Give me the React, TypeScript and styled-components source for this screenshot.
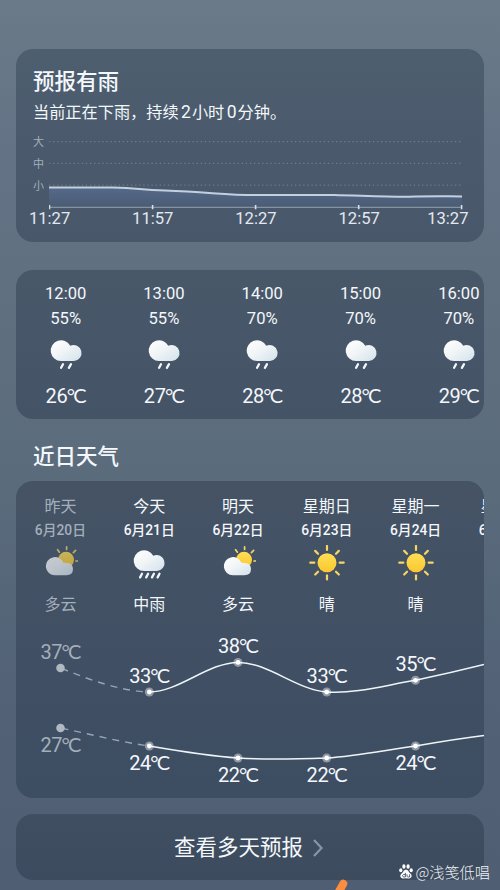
import React from "react";
import styled, { createGlobalStyle } from "styled-components";

const Global = createGlobalStyle`
  * { box-sizing: border-box; }
  body { margin: 0; }
`;

const Page = styled.main`
  position: relative;
  width: 500px;
  height: 890px;
  overflow: hidden;
  display: flex;
  flex-direction: column;
  align-items: center;
  padding-top: 49px;
  color: #f4f7fb;
  font-family: Roboto, "Noto Sans CJK SC", sans-serif;
  background: linear-gradient(180deg, #6a7a88 0%, #647486 15%, #5f6f80 35%, #5a6b7c 55%, #526176 80%, #4f5e72 100%);
`;

const Card = styled.section<{ $h: number; $from: string; $to: string; $gap?: number }>`
  flex: none;
  width: 468px;
  height: ${(p) => p.$h}px;
  margin-bottom: ${(p) => p.$gap ?? 0}px;
  border-radius: 17px;
  overflow: hidden;
  background: linear-gradient(180deg, ${(p) => p.$from}, ${(p) => p.$to});
`;

const Heading = styled.h2`
  margin: 0;
  font-size: 21.5px;
  line-height: 30px;
  font-weight: 500;
`;

const RainHeading = styled(Heading)`
  padding: 18px 17px 0;
`;

const SectionHeading = styled(Heading)`
  width: 468px;
  height: 62px;
  padding: 23px 17px 0;
`;

const RainText = styled.p`
  margin: 1px 0 0;
  padding-left: 17px;
  font-size: 16.2px;
  line-height: 29px;
  height: 28px;
`;

const Figure = styled.span`
  font-size: 17.5px;
  margin: 0 1px 0 2.4px;
`;

const RainChart = styled.div`
  display: flex;
  height: 82px;
`;

const Levels = styled.div`
  width: 33px;
  padding: 6px 0 0 17px;
  font-size: 11px;
  line-height: 22px;
  color: #a3aebb;
`;

const TimeAxis = styled.div`
  display: flex;
  width: 516px;
  margin-left: -18px;
  font-size: 16.6px;
  line-height: 22px;
  color: #e3e9f0;
`;

const Tick = styled.span<{ $last?: boolean }>`
  width: 103.2px;
  text-align: center;
  transform: ${(p) => (p.$last ? "translateX(-14.5px)" : "none")};
`;

const Row = styled.div`
  display: flex;
`;

const Hour = styled.div`
  flex: 0 0 98.3px;
  display: flex;
  flex-direction: column;
  align-items: center;
  padding: 10.5px 0 0 1px;
`;

const HourText = styled.span`
  font-size: 16.6px;
  line-height: 25px;
  height: 25px;
`;

const HourIcon = styled.div`
  margin-top: 5.5px;
  height: 36px;
`;

const HourTemp = styled.div`
  margin-top: 11px;
`;

const TempText = styled.span<{ $dim?: boolean }>`
  display: inline-flex;
  align-items: baseline;
  font-size: 20px;
  line-height: 26px;
  letter-spacing: -0.4px;
  color: ${(p) => (p.$dim ? "#a4afbc" : "#f4f7fb")};
`;

const Unit = styled.span`
  font-family: Lato, sans-serif;
  font-size: 20px;
  line-height: 20px;
  letter-spacing: -1.8px;
  margin: 0 1px 0 -0.6px;
`;

const Day = styled.div<{ $dim?: boolean }>`
  flex: 0 0 88.8px;
  height: 149px;
  display: flex;
  flex-direction: column;
  align-items: center;
  padding-top: 14px;
  color: ${(p) => (p.$dim ? "#a4afbc" : "#f4f7fb")};
  white-space: nowrap;
`;

const DayName = styled.span`
  font-size: 16px;
  line-height: 24px;
`;

const DayDate = styled.span`
  font-size: 13.8px;
  line-height: 22px;
  font-weight: 500;
`;

const DayIcon = styled.div<{ $dim?: boolean }>`
  height: 36px;
  margin: 4px 0 12px;
  opacity: ${(p) => (p.$dim ? 0.7 : 1)};
`;

const Plot = styled.div`
  position: relative;
  height: 168px;
`;

const PlotLabel = styled.div<{ $x: number; $y: number }>`
  position: absolute;
  left: ${(p) => p.$x - 40}px;
  top: ${(p) => p.$y - 13}px;
  width: 80px;
  text-align: center;
`;

const MoreButton = styled.button`
  flex: none;
  display: flex;
  align-items: center;
  justify-content: center;
  gap: 9px;
  width: 468px;
  height: 66px;
  padding: 2px 2px 0 0;
  border: 0;
  border-radius: 17px;
  color: #f4f7fb;
  font: 21.5px/30px Roboto, "Noto Sans CJK SC", sans-serif;
  background: linear-gradient(180deg, #3f4e60, #3c4b5d);
`;

const Watermark = styled.div`
  position: absolute;
  right: 10px;
  bottom: 8px;
  display: flex;
  align-items: center;
  gap: 2px;
  font: 300 15.2px/22px "Noto Sans CJK SC", sans-serif;
  color: #eef1f5;
`;

const Swoosh = styled.svg`
  position: absolute;
  left: 331px;
  bottom: 0;
`;

const svgBlock: React.CSSProperties = { display: "block" };

const Defs = () => (
  <svg width="0" height="0" style={{ position: "absolute" }}>
    <defs>
      <linearGradient id="cloud" x1="0" y1="0" x2="1" y2="1">
        <stop offset="0" stopColor="#ffffff" />
        <stop offset="0.45" stopColor="#f1f5f7" />
        <stop offset="1" stopColor="#d3e2eb" />
      </linearGradient>
      <linearGradient id="sun" x1="0" y1="0" x2="0" y2="1">
        <stop offset="0" stopColor="#ffdf55" />
        <stop offset="1" stopColor="#fcc62f" />
      </linearGradient>
      <linearGradient id="rain" x1="0" y1="0" x2="0" y2="1">
        <stop offset="0" stopColor="#5d77a4" stopOpacity="0.55" />
        <stop offset="1" stopColor="#536a92" stopOpacity="0.25" />
      </linearGradient>
    </defs>
  </svg>
);

const CLOUD = "M13 25A10.4 10.4 0 1 1 22.3 9.7A8 8 0 1 1 26 25Z";

const RainIcon = ({ heavy }: { heavy?: boolean }) => (
  <svg width="36" height="36" viewBox="0 0 36 36" style={svgBlock}>
    <path d={CLOUD} fill="url(#cloud)" transform={heavy ? "translate(0 1)" : undefined} />
    <path
      d={
        heavy
          ? "M11 28.8l-1.9 3.6M17.1 28.8l-1.9 3.6M22.9 28.8L21 32.4M28.5 28.8l-1.9 3.6"
          : "M15 28.2l-1.9 3.6M23 28.2l-2.1 3.6"
      }
      stroke="#f3f7fa"
      strokeWidth="2.3"
      strokeLinecap="round"
    />
  </svg>
);

const CloudyIcon = () => (
  <svg width="36" height="36" viewBox="0 0 36 36" style={svgBlock}>
    <circle cx="24" cy="14.8" r="8" fill="url(#sun)" />
    <path
      d="M24.6 1.8v2.7M15.6 4.7l1.8 2.5M33.6 5.4l-2.2 2.2M34 16h2.8"
      stroke="#f2d46b"
      strokeWidth="1.7"
      strokeLinecap="round"
    />
    <path
      d="M12.8 30.3A9.1 9.1 0 1 1 21.4 17.8Q31 17 31 24.1Q31 30.3 24.3 30.3Z"
      fill="url(#cloud)"
    />
  </svg>
);

const SunIcon = () => (
  <svg width="36" height="36" viewBox="0 0 36 36" style={svgBlock}>
    <circle cx="18" cy="17.7" r="9.5" fill="url(#sun)" />
    {[0, 45, 90, 135, 180, 225, 270, 315].map((a) => (
      <path
        key={a}
        d="M18 1v4"
        transform={`rotate(${a} 18 17.7)`}
        stroke="#f6d665"
        strokeWidth="2.2"
        strokeLinecap="round"
      />
    ))}
  </svg>
);

const Temp = ({ v, dim }: { v: number; dim?: boolean }) => (
  <TempText $dim={dim}>
    {v}
    <Unit>°C</Unit>
  </TempText>
);

const hours = [
  ["12:00", "55%", 26],
  ["13:00", "55%", 27],
  ["14:00", "70%", 28],
  ["15:00", "70%", 28],
  ["16:00", "70%", 29],
] as const;

const days = [
  { name: "昨天", date: "6月20日", icon: "cloudy", text: "多云", dim: true },
  { name: "今天", date: "6月21日", icon: "rain", text: "中雨" },
  { name: "明天", date: "6月22日", icon: "cloudy", text: "多云" },
  { name: "星期日", date: "6月23日", icon: "sun", text: "晴" },
  { name: "星期一", date: "6月24日", icon: "sun", text: "晴" },
  { name: "星期二", date: "6月25日", icon: "", text: "" },
];

const highs = [
  { t: 37, x: 44.5, y: 38, ly: 22 },
  { t: 33, x: 133.3, y: 62, ly: 46 },
  { t: 38, x: 222, y: 32.4, ly: 16 },
  { t: 33, x: 310.7, y: 62, ly: 46 },
  { t: 35, x: 399.5, y: 50.3, ly: 34 },
];
const lows = [
  { t: 27, x: 44.5, y: 98, ly: 115 },
  { t: 24, x: 133.3, y: 116, ly: 133 },
  { t: 22, x: 222, y: 128, ly: 145 },
  { t: 22, x: 310.7, y: 128, ly: 145 },
  { t: 24, x: 399.5, y: 116, ly: 133 },
];

const DayGlyph = ({ kind }: { kind: string }) =>
  kind === "rain" ? <RainIcon heavy /> : kind === "cloudy" ? <CloudyIcon /> : kind === "sun" ? <SunIcon /> : null;

export default function App() {
  return (
    <Page>
      <Global />
      <Defs />
      <Card $h={193} $gap={28} $from="#4d5e6f" $to="#48576a">
        <RainHeading>预报有雨</RainHeading>
        <RainText>
          当前正在下雨，持续<Figure>2</Figure>小时<Figure>0</Figure>分钟。
        </RainText>
        <RainChart>
          <Levels>
            <div>大</div>
            <div>中</div>
            <div>小</div>
          </Levels>
          <svg width="420" height="85" viewBox="0 0 420 85" fill="none">
            <path
              d="M0 15.6H414M0 37.3H414M0 59.2H414"
              stroke="#8593a2"
              strokeOpacity="0.6"
              strokeWidth="1.2"
              strokeDasharray="1.3 2.8"
            />
            <path
              d="M0 61.6H64C90 62 90 64 116 64.6C160 66 175 69 206 69H285C320 70 340 71 360 70.8C380 70 395 70.4 413 70.4V81H0Z"
              fill="url(#rain)"
            />
            <path d="M0 81.3H413" stroke="#8492a1" strokeWidth="1.2" />
            <path
              d="M0 61.6H64C90 62 90 64 116 64.6C160 66 175 69 206 69H285C320 70 340 71 360 70.8C380 70 395 70.4 413 70.4"
              stroke="#c3d0e0"
              strokeWidth="2"
            />
            <path d="M.5 79v4.2M103.6 79v4.2M206.6 79v4.2M309.7 79v4.2M412.6 79v4.2" stroke="#d6dee7" strokeWidth="1.6" />
          </svg>
        </RainChart>
        <TimeAxis>
          {["11:27", "11:57", "12:27", "12:57", "13:27"].map((t, i) => (
            <Tick key={t} $last={i === 4}>
              {t}
            </Tick>
          ))}
        </TimeAxis>
      </Card>

      <Card $h={149} $from="#495869" $to="#445366">
        <Row>
          {hours.map(([time, chance, temp]) => (
            <Hour key={time}>
              <HourText>{time}</HourText>
              <HourText>{chance}</HourText>
              <HourIcon>
                <RainIcon />
              </HourIcon>
              <HourTemp>
                <Temp v={temp} />
              </HourTemp>
            </Hour>
          ))}
        </Row>
      </Card>

      <SectionHeading>近日天气</SectionHeading>

      <Card $h={317} $gap={16} $from="#455365" $to="#3d4d62">
        <Row>
          {days.map((d) => (
            <Day key={d.date} $dim={d.dim}>
              <DayName>{d.name}</DayName>
              <DayDate>{d.date}</DayDate>
              <DayIcon $dim={d.dim}>
                <DayGlyph kind={d.icon} />
              </DayIcon>
              <DayName>{d.text}</DayName>
            </Day>
          ))}
        </Row>
        <Plot>
          <svg width="468" height="168" viewBox="0 0 468 168" fill="none" style={svgBlock}>
            <g stroke="#97a4b3" strokeWidth="1.4" strokeDasharray="7 6">
              <path d="M44.5 38C74 50 104 61 133.3 62" strokeDashoffset="-1" />
              <path d="M44.5 98C74 104 104 112 133.3 116" strokeDashoffset="-1" />
            </g>
            <g stroke="#eef5fa" strokeWidth="1.5">
              <path d="M133.3 62C163 62 192 32.4 222 32.4S281 60 310.7 62S370 55 399.5 50.3Q434 43 468 34.5" />
              <path d="M133.3 116Q192 126 222 128T310.7 128C340 126 370 120 399.5 116Q440 109 468 105.5" />
            </g>
            {[...highs, ...lows].map((p) =>
              p.x < 50 ? (
                <circle key={`${p.x}-${p.y}`} cx={p.x} cy={p.y} r="4.3" fill="#b0b8c2" />
              ) : (
                <g key={`${p.x}-${p.y}`}>
                  <circle cx={p.x} cy={p.y} r="4.5" fill="#fff" fillOpacity="0.42" />
                  <circle cx={p.x} cy={p.y} r="2.4" fill="#fff" />
                </g>
              )
            )}
          </svg>
          {[...highs, ...lows].map((p) => (
            <PlotLabel key={`${p.x}-${p.y}`} $x={p.x} $y={p.ly}>
              <Temp v={p.t} dim={p.x < 50} />
            </PlotLabel>
          ))}
        </Plot>
      </Card>

      <MoreButton>
        查看多天预报
        <svg width="12" height="20" viewBox="0 0 12 20" fill="none">
          <path d="M2 2L9.5 10L2 18" stroke="#8895a3" strokeWidth="2.2" />
        </svg>
      </MoreButton>

      <Swoosh width="24" height="11" viewBox="0 0 24 11">
        <path d="M12.3 4.7L6 16" stroke="#fa8d3e" strokeWidth="8" strokeLinecap="round" />
      </Swoosh>

      <Watermark>
        <svg width="14" height="15" viewBox="0 0 14 15" fill="#fff">
          <ellipse cx="1.8" cy="6.3" rx="1.6" ry="2" />
          <ellipse cx="4.9" cy="2.5" rx="1.6" ry="2.2" />
          <ellipse cx="9.1" cy="2.5" rx="1.6" ry="2.2" />
          <ellipse cx="12.2" cy="6.3" rx="1.6" ry="2" />
          <path d="M7 5.8C9.6 5.8 9.6 8.3 11.4 9.6C13.8 11.7 12.4 14.7 9.9 14.4Q7 14 4.1 14.4C1.6 14.7.2 11.7 2.6 9.6C4.4 8.3 4.4 5.8 7 5.8Z" />
          <path d="M6.4 8.8V13H4.8Q3.5 12.8 3.6 11.4T6.4 10.6M8 10.3V12.2Q8.3 13 9.2 13H10.6V10.3" fill="none" stroke="#465264" strokeWidth="0.9" />
        </svg>
        <span>@浅笺低唱</span>
      </Watermark>
    </Page>
  );
}
